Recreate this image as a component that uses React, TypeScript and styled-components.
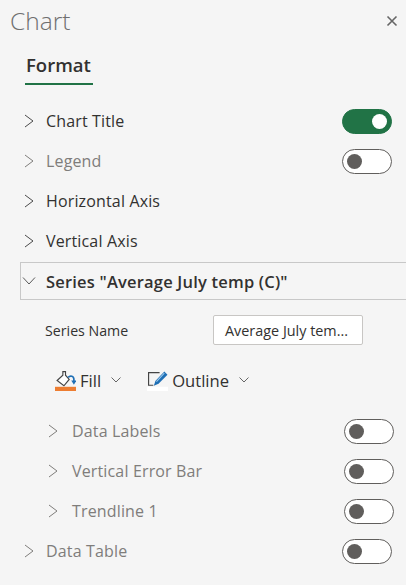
import React from "react";
import styled, { createGlobalStyle } from "styled-components";

const GlobalStyle = createGlobalStyle`
  html, body {
    margin: 0;
    padding: 0;
    background: #f5f5f5;
  }
  body {
    font-family: "Open Sans", "Noto Sans", "Liberation Sans", sans-serif;
  }
`;

const Pane = styled.div`
  width: 406px;
  height: 585px;
  overflow: hidden;
  background: #f5f5f5;
  color: #323130;
`;

const Header = styled.div`
  height: 41px;
  display: flex;
  align-items: center;
  justify-content: space-between;
  padding: 0 7px 0 10px;
`;

const Title = styled.h1`
  margin: 0;
  font-size: 24.5px;
  font-weight: 300;
  color: #6f6f6f;
`;

const Close = styled.button`
  border: 0;
  padding: 0;
  background: none;
  width: 14px;
  height: 14px;
  display: flex;
  color: #666;
`;

const Tabs = styled.div`
  padding: 10px 0 0 25px;
  height: 36px;
`;

const Tab = styled.div`
  display: inline-block;
  width: 68px;
  height: 34px;
  box-sizing: border-box;
  border-bottom: 2px solid #217346;
  font-size: 18.5px;
  font-weight: 600;
  line-height: 27px;
  padding-left: 1px;
  color: #323130;
`;

const List = styled.div`
  padding-top: 14px;
`;

const Row = styled.div<{ $nested?: boolean; $dim?: boolean }>`
  height: 40px;
  display: flex;
  align-items: center;
  padding-left: ${(p) => (p.$nested ? 48 : 24)}px;
  padding-right: ${(p) => (p.$nested ? 12 : 14)}px;
  color: ${(p) => (p.$dim ? "#7f7d7b" : "#323130")};
`;

const Open = styled.div`
  height: 38px;
  margin: 1px 0 1px 20px;
  display: flex;
  align-items: center;
  border: 1px solid #c8c8c8;
  border-right: 0;
  box-sizing: border-box;
  color: #323130;
`;

const Arrow = styled.svg<{ $dim?: boolean }>`
  width: 10px;
  height: 14px;
  flex: none;
  color: ${(p) => (p.$dim ? "#7f7d7b" : "#4a4a4a")};
`;

const ArrowDown = styled.svg`
  width: 14px;
  height: 8px;
  margin-left: 1px;
  flex: none;
  color: #5a5a5a;
`;

const Label = styled.span<{ $nested?: boolean }>`
  margin-left: ${(p) => (p.$nested ? 14 : 12)}px;
  font-size: 16px;
  letter-spacing: 0.15px;
  flex: 1;
`;

const OpenLabel = styled.span`
  margin-left: 10px;
  font-size: 16.5px;
  font-weight: 600;
  letter-spacing: 0.2px;
`;

const Toggle = styled.div<{ $on?: boolean }>`
  width: 50px;
  height: 25px;
  box-sizing: border-box;
  border-radius: 13px;
  border: 1px solid ${(p) => (p.$on ? "#217346" : "#605e5c")};
  background: ${(p) => (p.$on ? "#217346" : "#fff")};
  display: flex;
  align-items: center;
  justify-content: ${(p) => (p.$on ? "flex-end" : "flex-start")};
  padding: 0 4px;
`;

const Knob = styled.div<{ $on?: boolean }>`
  width: 15px;
  height: 15px;
  border-radius: 50%;
  background: ${(p) => (p.$on ? "#fff" : "#605e5c")};
`;

const NameRow = styled.div`
  height: 30px;
  margin-top: 15px;
  display: flex;
  align-items: center;
  padding-left: 45px;
`;

const NameLabel = styled.span`
  width: 168px;
  font-size: 14.2px;
  color: #323130;
`;

const NameInput = styled.div`
  width: 150px;
  height: 30px;
  box-sizing: border-box;
  background: #fff;
  border: 1px solid #c8c6c4;
  border-radius: 2px;
  display: flex;
  align-items: center;
  padding-left: 11px;
  font-size: 14.4px;
  white-space: nowrap;
  color: #323130;
`;

const Toolbar = styled.div`
  height: 30px;
  margin-top: 20px;
  margin-bottom: 16px;
  display: flex;
  align-items: center;
  padding-left: 55px;
`;

const ToolButton = styled.div<{ $gap: number }>`
  display: flex;
  align-items: center;
  margin-right: ${(p) => p.$gap}px;
`;

const ToolIcon = styled.svg`
  width: 21px;
  height: 21px;
  flex: none;
  display: block;
`;

const ToolText = styled.span`
  margin-left: 4px;
  font-size: 16.6px;
  color: #323130;
`;

const ToolCaret = styled.svg`
  width: 10px;
  height: 6px;
  margin-left: 10px;
  color: #666;
`;

const RightArrow = ({ dim }: { dim?: boolean }) => (
  <Arrow $dim={dim} viewBox="0 0 10 14" fill="none">
    <path d="M1 1l8 6-8 6" stroke="currentColor" strokeWidth="1" />
  </Arrow>
);

const Caret = () => (
  <ToolCaret viewBox="0 0 10 6" fill="none">
    <path d="M.5.5L5 5 9.5.5" stroke="currentColor" strokeWidth="1" />
  </ToolCaret>
);

const Switch = ({ on }: { on?: boolean }) => (
  <Toggle $on={on}>
    <Knob $on={on} />
  </Toggle>
);

const App = () => (
  <Pane>
    <GlobalStyle />
    <Header>
      <Title>Chart</Title>
      <Close aria-label="Close">
        <svg viewBox="0 0 14 14" width="14" height="14" fill="none">
          <path d="M2.5 2.5l9 9M11.5 2.5l-9 9" stroke="currentColor" strokeWidth="1.6" />
        </svg>
      </Close>
    </Header>
    <Tabs>
      <Tab>Format</Tab>
    </Tabs>
    <List>
      <Row>
        <RightArrow />
        <Label>Chart Title</Label>
        <Switch on />
      </Row>
      <Row $dim>
        <RightArrow dim />
        <Label>Legend</Label>
        <Switch />
      </Row>
      <Row>
        <RightArrow />
        <Label>Horizontal Axis</Label>
      </Row>
      <Row>
        <RightArrow />
        <Label>Vertical Axis</Label>
      </Row>
      <Open>
        <ArrowDown viewBox="0 0 14 8" fill="none">
          <path d="M1 .5l6 6.5 6-6.5" stroke="currentColor" strokeWidth="1" />
        </ArrowDown>
        <OpenLabel>Series "Average July temp (C)"</OpenLabel>
      </Open>
      <NameRow>
        <NameLabel>Series Name</NameLabel>
        <NameInput>Average July tem...</NameInput>
      </NameRow>
      <Toolbar>
        <ToolButton $gap={26}>
          <ToolIcon viewBox="0 0 20 20" fill="none">
            <path d="M7.5 1.5h2.5v3.5l3.5 4-5 6L2 10l5.5-5z" fill="#fff" stroke="#444" strokeWidth="1.1" />
            <path d="M12.5 7c2-2 5.5-1.5 5.5 2v2" stroke="#1f6fb5" strokeWidth="1.6" />
            <path d="M15.5 10h5L18 14z" fill="#1f6fb5" />
            <rect x="0" y="16" width="20" height="4.5" fill="#ed7d31" />
          </ToolIcon>
          <ToolText>Fill</ToolText>
          <Caret />
        </ToolButton>
        <ToolButton $gap={0}>
          <ToolIcon viewBox="0 0 20 20" fill="none">
            <path d="M12 2.5H1.5V14.5H6" stroke="#444" strokeWidth="1.1" />
            <path d="M6.5 15l1.5-4.5L16.5 1.5l3 3-8.5 8.5z" fill="#1f6fb5" />
            <path d="M9 11l7.5-8" stroke="#9cc9ec" strokeWidth="1" />
            <rect x="0" y="16" width="20" height="4.5" fill="#fff" />
          </ToolIcon>
          <ToolText>Outline</ToolText>
          <Caret />
        </ToolButton>
      </Toolbar>
      <Row $nested $dim>
        <RightArrow dim />
        <Label $nested>Data Labels</Label>
        <Switch />
      </Row>
      <Row $nested $dim>
        <RightArrow dim />
        <Label $nested>Vertical Error Bar</Label>
        <Switch />
      </Row>
      <Row $nested $dim>
        <RightArrow dim />
        <Label $nested>Trendline 1</Label>
        <Switch />
      </Row>
      <Row $dim>
        <RightArrow dim />
        <Label>Data Table</Label>
        <Switch />
      </Row>
    </List>
  </Pane>
);

export default App;
